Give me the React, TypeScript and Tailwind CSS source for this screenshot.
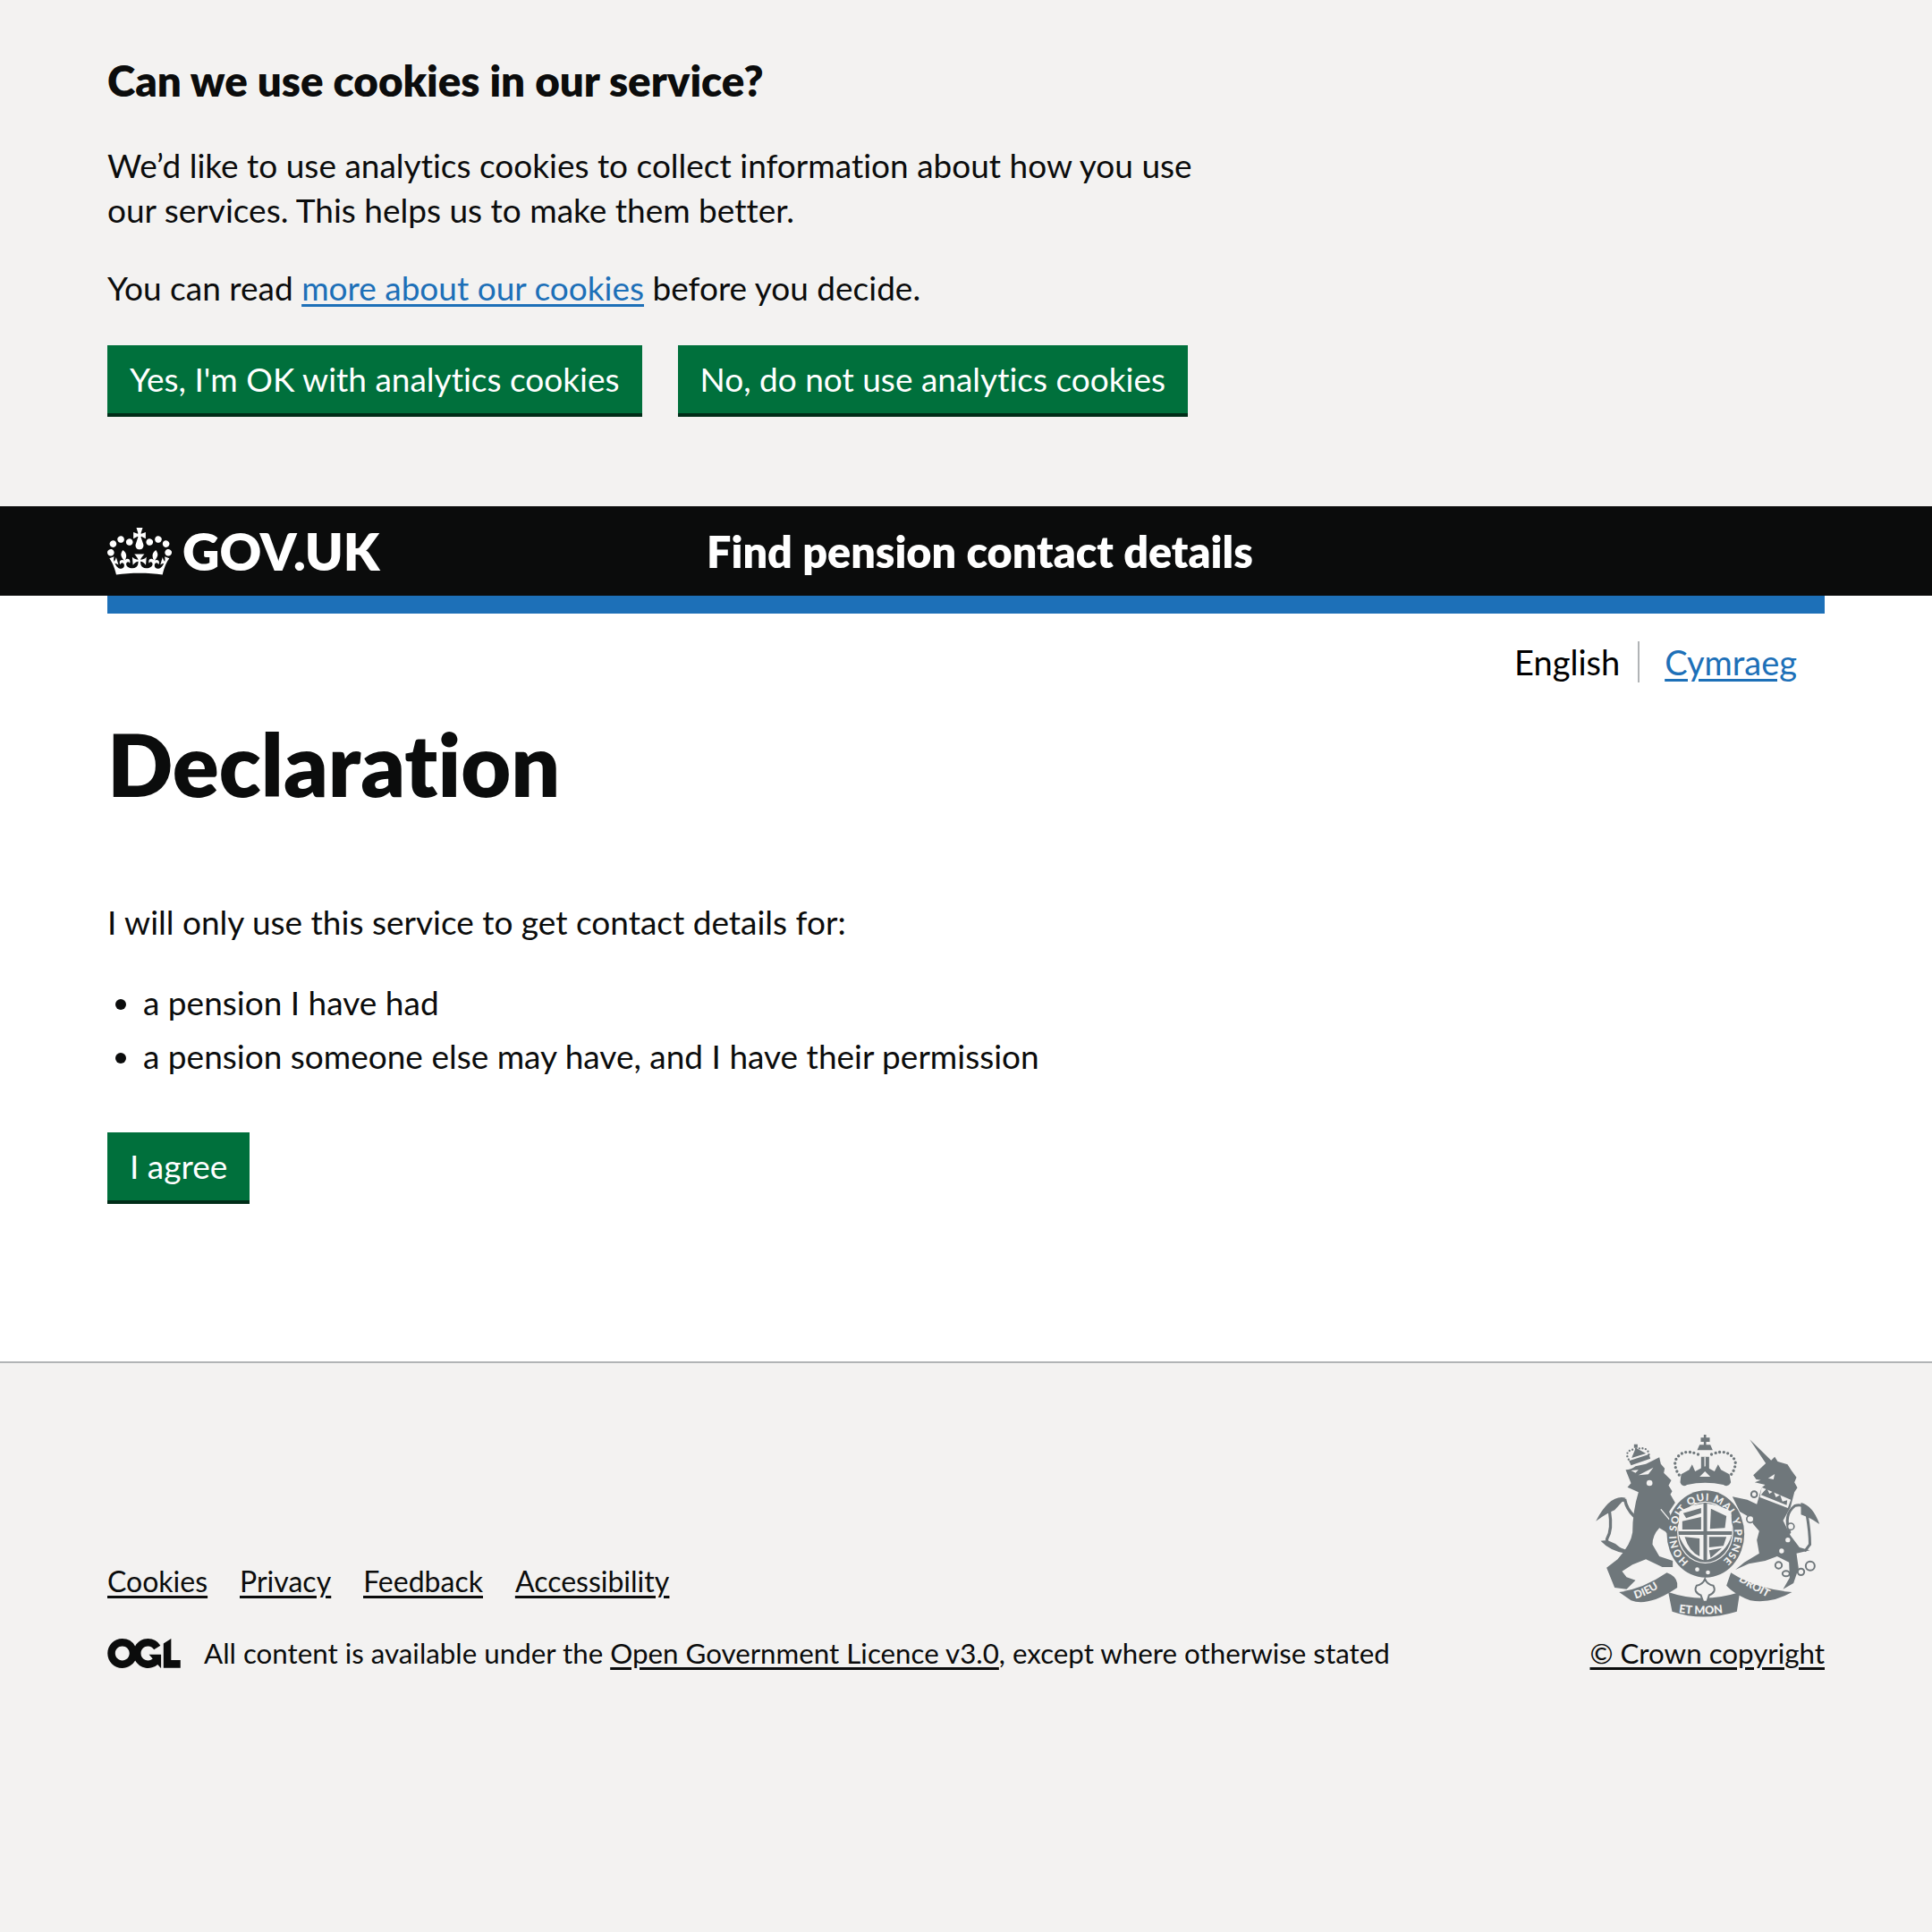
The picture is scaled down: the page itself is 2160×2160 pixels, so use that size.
const font = '[font-family:Lato,sans-serif] [font-variant-ligatures:none]';

function Crown() {
  return (
    <svg viewBox="0 0 132 97" className="h-[53px] w-[72px] shrink-0 text-white" aria-hidden="true">
      <path
        fill="currentColor"
        fillRule="evenodd"
        d="M25 30.2c3.5 1.5 7.7-.2 9.1-3.7 1.5-3.6-.2-7.8-3.9-9.2-3.6-1.4-7.6.3-9.1 3.9-1.4 3.5.3 7.5 3.9 9zM9 39.5c3.6 1.5 7.8-.2 9.2-3.7 1.5-3.6-.2-7.8-3.9-9.1-3.6-1.5-7.6.2-9.1 3.8-1.4 3.5.3 7.5 3.8 9zM4.4 57.2c3.5 1.5 7.7-.2 9.1-3.8 1.5-3.6-.2-7.7-3.9-9.1-3.5-1.5-7.6.3-9.1 3.8-1.4 3.5.3 7.6 3.9 9.1zm38.3-21.4c3.5 1.5 7.7-.2 9.1-3.8 1.5-3.6-.2-7.7-3.9-9.1-3.6-1.5-7.6.3-9.1 3.8-1.3 3.6.4 7.7 3.9 9.1zm64.4-5.6c-3.6 1.5-7.8-.2-9.1-3.7-1.5-3.6.2-7.8 3.8-9.2 3.6-1.4 7.7.3 9.2 3.9 1.3 3.5-.4 7.5-3.9 9zm15.9 9.3c-3.6 1.5-7.7-.2-9.1-3.7-1.5-3.6.2-7.8 3.7-9.1 3.6-1.5 7.7.2 9.2 3.8 1.5 3.5-.3 7.5-3.8 9zm4.7 17.7c-3.6 1.5-7.8-.2-9.2-3.8-1.5-3.6.2-7.7 3.9-9.1 3.6-1.5 7.7.3 9.2 3.8 1.3 3.5-.4 7.6-3.9 9.1zM89.3 35.8c-3.6 1.5-7.8-.2-9.2-3.8-1.4-3.6.2-7.7 3.9-9.1 3.6-1.5 7.7.3 9.2 3.8 1.4 3.6-.3 7.7-3.9 9.1zM69.7 17.7l8.9 4.7V9.3l-8.9 2.8c-.2-.3-.5-.6-.9-.9L72.4 0H59.6l3.5 11.2c-.3.3-.6.5-.9.9l-8.8-2.8v13.1l8.8-4.7c.3.3.6.7.9.9l-5 15.4v.1c-.2.8-.4 1.6-.4 2.4 0 4.1 3.1 7.5 7 8.1h.2c.3 0 .7.1 1 .1.4 0 .7 0 1-.1h.2c4-.6 7.1-4.1 7.1-8.1 0-.8-.1-1.7-.4-2.4V34l-5.1-15.4c.4-.2.7-.6 1-.9zM66 92.8c16.9 0 32.8 1.1 47.1 3.2 4-16.9 8.9-26.7 14-33.5l-9.6-3.4c1 4.9 1.1 7.2 0 10.2-1.5-1.4-3-4.3-4.2-8.7L108.6 76c2.8-2 5-3.2 7.5-3.3-4.4 9.4-10 11.9-13.6 11.2-4.3-.8-6.3-4.6-5.6-7.9 1-4.7 5.7-5.9 8-.5 4.3-8.7-3-11.4-7.6-8.8 7.1-7.2 7.9-13.5 2.1-21.1-8 6.1-8.1 12.3-4.5 20.8-4.7-5.4-12.1-2.5-9.5 6.2 3.4-5.2 7.9-2 7.2 3.1-.6 4.3-6.4 7.8-13.5 7.2-10.3-.9-10.9-8-11.2-13.8 2.5-.5 7.1 1.8 11 7.3L80.2 60c-4.1 4.4-8 5.3-12.3 5.4 1.4-4.4 8-11.6 8-11.6H55.5s6.4 7.2 7.9 11.6c-4.2-.1-8-1-12.3-5.4l1.4 16.4c3.9-5.5 8.5-7.7 10.9-7.3-.3 5.8-.9 12.8-11.1 13.8-7.2.6-12.9-2.9-13.5-7.2-.7-5 3.8-8.3 7.1-3.1 2.7-8.7-4.6-11.6-9.4-6.2 3.7-8.5 3.6-14.7-4.6-20.8-5.8 7.6-5 13.9 2.2 21.1-4.7-2.6-11.9.1-7.7 8.8 2.3-5.5 7.1-4.2 8.1.5.7 3.3-1.3 7.1-5.7 7.9-3.5.7-9-1.8-13.5-11.2 2.5.1 4.7 1.3 7.5 3.3l-4.7-15.4c-1.2 4.4-2.7 7.2-4.3 8.7-1.1-3-.9-5.3 0-10.2l-9.5 3.4c5 6.9 9.9 16.7 14 33.5 14.8-2.1 30.8-3.2 47.7-3.2z"
      />
    </svg>
  );
}

function OglLogo() {
  return (
    <svg viewBox="0 0 483.2 195.7" className="h-[33px] w-[82px] shrink-0 text-[#0b0c0c]" aria-hidden="true">
      <path
        fill="currentColor"
        d="M421.5 142.8V.1l-50.7 32.3v161.1h112.4v-50.7zm-122.3-9.6A47.12 47.12 0 0 1 221 97.8c0-26 21.1-47.1 47.1-47.1 16.7 0 31.4 8.7 39.7 21.8l42.7-27.2A97.63 97.63 0 0 0 268.1 0c-36.5 0-68.3 20.1-85.1 49.7A98 98 0 0 0 97.8 0C43.9 0 0 43.9 0 97.8s43.9 97.8 97.8 97.8c36.5 0 68.3-20.1 85.1-49.7a97.76 97.76 0 0 0 149.6 25.4l19.4 22.2h3v-87.8h-80l24.3 27.5zM97.8 145c-26 0-47.1-21.1-47.1-47.1s21.1-47.1 47.1-47.1 47.2 21 47.2 47S123.8 145 97.8 145"
      />
    </svg>
  );
}

// Hand traced from the reference, coordinates are the 3x zoom of the crest
function RoyalArms() {
  const grey = '#6f777b';
  const bg = '#f3f2f1';
  const letters = 'Lato, sans-serif';
  return (
    <svg viewBox="60 60 770 630" className="mr-[3px] h-[210px] w-[257px]" aria-hidden="true">
      <defs>
        <path id="garter" d="M384 497 A98 112 0 1 1 496 497" />
        <path id="dieu" d="M205 622 Q265 605 315 560" />
        <path id="droit" d="M550 562 Q610 600 668 628" />
        <path id="etmon" d="M350 668 Q440 682 525 665" />
      </defs>
      {/* lion */}
      <path
        fill={grey}
        d="M172 190 Q190 190 205 178 L240 170 L285 148 L290 170 L303 185 L300 200 L325 225 L316 242 L328 262 L322 272 L338 300 L318 330 L345 405 L332 428 L305 397 L285 385 Q262 410 262 440 L285 480 L330 495 L330 516 L295 516 L240 490 L195 508 L160 530 L175 550 L205 560 L175 590 L135 585 L108 518 L145 490 Q190 440 195 400 Q195 330 215 265 L178 248 L190 235 Z"
      />
      <path fill="none" stroke={grey} strokeWidth="10" strokeLinecap="round" d="M200 345 Q175 320 170 292 Q120 285 118 330 Q128 390 110 420 Q100 438 170 462" />
      <path fill={grey} d="M172 284 Q120 270 72 362 Q110 335 135 325 Z M88 428 Q130 418 172 470 Q120 462 88 428 Z" />
      <path fill="none" stroke={bg} strokeWidth="4" d="M290 322 L340 382" />
      <path fill={bg} d="M215 208 L265 182 L248 205 Z M190 192 L215 190 L205 200 Z" />
      <circle cx="252" cy="234" r="10" fill={bg} />
      {/* lion crown */}
      <path fill="none" stroke={grey} strokeWidth="7" strokeLinecap="round" strokeDasharray="0 11" d="M182 155 Q165 125 205 120 Q250 110 250 142" />
      <path fill={grey} d="M183 160 L250 138 L255 152 L190 175 Z M200 104 h12 v12 h-12 Z M206 116 L192 150 L240 135 Z" />
      {/* unicorn */}
      <path
        fill={grey}
        d="M588 88 L660 158 L672 146 L682 162 L715 172 L728 192 L745 215 L738 232 L748 250 L738 265 L725 315 L700 360 L725 410 L755 450 L790 460 L745 470 L752 520 L735 570 L700 590 L722 552 L720 500 L680 480 L640 495 L585 505 L540 525 L570 500 L620 470 L612 425 L620 395 L600 372 L590 350 L555 330 L530 280 L580 290 L612 305 L628 250 L640 240 L605 232 L625 224 L610 222 L600 208 L642 168 Z"
      />
      <path fill="none" stroke={grey} strokeWidth="9" strokeLinecap="round" d="M722 400 Q700 340 740 310 Q775 300 780 340 Q790 400 790 440 L775 460" />
      <path fill={grey} d="M760 300 Q800 310 822 372 Q790 350 760 340 Z" />
      <path fill={bg} d="M628 248 L726 290 L716 318 L622 282 Z" />
      <path fill={grey} d="M636 262 L646 252 L654 270 L668 262 L676 282 L690 274 L698 296 L714 292 L712 308 L626 274 Z" />
      <path fill={bg} d="M650 218 L672 204 L668 222 Z" />
      <circle cx="603" cy="272" r="10" fill="none" stroke={grey} strokeWidth="6" />
      <circle cx="590" cy="355" r="12" fill={bg} stroke={grey} strokeWidth="5" />
      <circle cx="726" cy="380" r="11" fill={bg} stroke={grey} strokeWidth="5" />
      <circle cx="716" cy="425" r="8" fill={bg} />
      <circle cx="695" cy="462" r="8" fill={bg} />
      <circle cx="685" cy="510" r="11" fill="none" stroke={grey} strokeWidth="6" />
      <ellipse cx="710" cy="538" rx="12" ry="9" fill="none" stroke={grey} strokeWidth="6" />
      <circle cx="760" cy="532" r="11" fill="none" stroke={grey} strokeWidth="6" />
      <circle cx="791" cy="512" r="15" fill="none" stroke={grey} strokeWidth="6" />
      {/* royal crown */}
      <path fill={grey} d="M424 82 h10 v-10 h8 v10 h12 v14 h-12 v10 h-8 v-10 h-10 Z M420 106 h36 l8 18 h-52 Z M425 146 h27 v40 h-27 Z" />
      <path fill="none" stroke={bg} strokeWidth="4" d="M438 146 V182" />
      <path fill="none" stroke={grey} strokeWidth="10" strokeLinecap="round" strokeDasharray="0 14" d="M415 138 Q360 115 338 160 Q335 190 358 215 M460 138 Q515 115 540 160 Q542 190 518 215" />
      <path fill={grey} d="M358 205 L385 190 L395 172 L405 195 L438 178 L470 195 L482 172 L492 190 L520 205 L525 232 Q515 250 500 240 Q438 226 378 240 Q362 250 355 232 Z" />
      <path fill={bg} d="M438 195 l18 18 h-36 Z" />
      {/* garter and shield */}
      <ellipse cx="440" cy="405" rx="130" ry="146" fill={grey} />
      <ellipse cx="439" cy="400" rx="94" ry="104" fill={bg} />
      <ellipse cx="439" cy="400" rx="90" ry="100" fill={grey} />
      <path fill={bg} d="M352 330 Q390 308 433 303 V396 H349 Z M445 303 Q490 308 526 330 L529 396 H445 Z M350 408 H433 V493 Q375 475 350 408 Z M445 408 H528 Q510 470 445 493 Z" />
      <path fill={grey} d="M365 335 L425 318 L425 335 L375 352 Z M362 362 L425 348 L425 390 L362 390 Z M458 320 L510 345 L505 385 L455 388 Z M370 415 L420 420 L420 480 Q385 465 370 415 Z M452 415 L510 415 L500 445 L452 450 Z M452 460 L495 452 L457 485 Z" />
      <text fontFamily={letters} fontSize="34" fontWeight="900" fill={bg}>
        <textPath href="#garter" textLength="535">HONI SOIT QUI MAL Y PENSE</textPath>
      </text>
      <circle cx="412" cy="524" r="7" fill={bg} />
      <circle cx="448" cy="534" r="7" fill={bg} />
      {/* motto scroll */}
      <path fill={grey} d="M150 600 Q230 590 310 535 Q340 545 345 570 L345 585 Q250 650 190 628 Z" />
      <path fill={grey} d="M525 535 Q610 590 730 600 Q660 640 590 628 Q540 610 510 578 Z" />
      <path fill={grey} d="M315 600 Q430 640 555 600 L545 665 Q430 700 328 665 Z" />
      <path fill={bg} stroke={grey} strokeWidth="6" d="M438 556 Q446 575 466 578 Q478 600 452 610 L445 632 H432 L424 610 Q398 600 410 578 Q430 575 438 556 Z" />
      <text fontFamily={letters} fontSize="36" fontWeight="900" fill={bg}>
        <textPath href="#dieu">DIEU</textPath>
      </text>
      <text fontFamily={letters} fontSize="36" fontWeight="900" fill={bg}>
        <textPath href="#droit">DROIT</textPath>
      </text>
      <text fontFamily={letters} fontSize="38" fontWeight="900" fill={bg}>
        <textPath href="#etmon">ET MON</textPath>
      </text>
    </svg>
  );
}

function GreenButton({ children }: { children: React.ReactNode }) {
  return (
    <button className="h-[80px] border-b-4 border-[#002d18] bg-[#00703c] px-[25px] text-[37px] leading-[50px] text-white">
      {children}
    </button>
  );
}

function CookieBanner() {
  return (
    <div className="bg-[#f3f2f1] px-[120px] pb-[100px] pt-[60px] text-[#0b0c0c]">
      <h2 className="text-[47.5px] font-extrabold leading-[60px]">Can we use cookies in our service?</h2>
      <p className="mt-[40px] w-[1240px] text-[37px] leading-[50px]">
        We’d like to use analytics cookies to collect information about how you use our services. This helps us to make them better.
      </p>
      <p className="mt-[37px] text-[37px] leading-[50px]">
        You can read <a className="text-[#1d70b8] underline underline-offset-4">more about our cookies</a> before you decide.
      </p>
      <div className="mt-[39px] flex gap-10">
        <GreenButton>Yes, I'm OK with analytics cookies</GreenButton>
        <GreenButton>No, do not use analytics cookies</GreenButton>
      </div>
    </div>
  );
}

function Header() {
  return (
    <div>
      <div className="flex h-[100px] items-center bg-[#0b0c0c] px-[120px] text-white">
        <div className="flex w-[670px] items-center gap-[12px]">
          <Crown />
          <span className="text-[57.5px] font-extrabold leading-none">GOV.UK</span>
        </div>
        <span className="text-[48.5px] font-extrabold leading-[60px]">Find pension contact details</span>
      </div>
      <div className="mx-[120px] h-5 bg-[#1d70b8]" />
    </div>
  );
}

function LanguageToggle() {
  return (
    <div className="mx-[120px] mt-[31px] flex h-[46px] items-center justify-end pr-[31px] text-[38px]">
      <span>English</span>
      <span className="ml-5 mr-7 h-[46px] w-0.5 bg-[#b1b4b6]" />
      <a className="text-[#1d70b8] underline underline-offset-4">Cymraeg</a>
    </div>
  );
}

function Declaration() {
  return (
    <main className="mx-[120px] text-[#0b0c0c]">
      <h1 className="mt-[41px] text-[96.5px] font-extrabold leading-[100px]">Declaration</h1>
      <p className="mt-[102px] text-[37px] leading-[50px]">I will only use this service to get contact details for:</p>
      <ul className="mt-10 list-disc pl-10 text-[37px] leading-[50px]">
        <li>a pension I have had</li>
        <li className="mt-2.5">a pension someone else may have, and I have their permission</li>
      </ul>
      <div className="mt-[60px]">
        <GreenButton>I agree</GreenButton>
      </div>
    </main>
  );
}

function Footer() {
  return (
    <footer className="mt-[176px] flex h-[638px] items-start justify-between border-t-2 border-[#b1b4b6] bg-[#f3f2f1] px-[120px] pt-[76px] text-[31.3px] text-[#0b0c0c]">
      <div className="mt-[145px]">
        <div className="flex gap-[36px] text-[32px] leading-[46px] underline underline-offset-4">
          <a>Cookies</a>
          <a>Privacy</a>
          <a>Feedback</a>
          <a>Accessibility</a>
        </div>
        <div className="mt-[34px] flex items-center gap-[26px] leading-[46px]">
          <OglLogo />
          <span>
            All content is available under the <a className="underline underline-offset-4">Open Government Licence v3.0</a>, except where otherwise stated
          </span>
        </div>
      </div>
      <div className="flex flex-col items-end">
        <RoyalArms />
        <a className="mt-[15px] leading-[46px] underline underline-offset-4">© Crown copyright</a>
      </div>
    </footer>
  );
}

export default function App() {
  return (
    <div className={`min-h-[2160px] bg-white ${font}`}>
      <CookieBanner />
      <Header />
      <LanguageToggle />
      <Declaration />
      <Footer />
    </div>
  );
}
